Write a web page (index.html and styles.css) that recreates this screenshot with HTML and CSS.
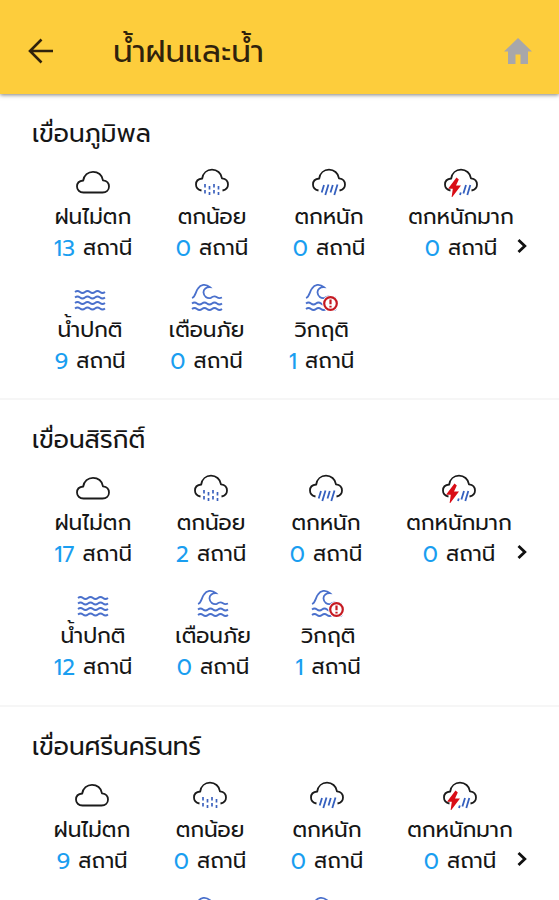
FILE: index.html
```html
<!DOCTYPE html>
<html lang="th">
<head>
  <meta charset="UTF-8">
  <meta name="viewport" content="width=device-width, initial-scale=1.0">
  <title>น้ำฝนและน้ำ</title>
  <link rel="stylesheet" href="styles.css">
</head>
<body>
  <!-- Icons shared by all dams -->
  <svg class="icon-defs" aria-hidden="true">
    <symbol id="cloud" viewBox="0 0 36 30">
      <path class="line" d="M8.500 25.500C4.500 25.500 2 22.800 2 19.500c0-3.400 2.500-5.600 6.200-6C9 8.200 13 4.800 18 4.800s9.200 3.200 10 8.500c3.700.4 6 3 6 6.200 0 3.400-2.600 6-6.500 6z"/>
    </symbol>
    <symbol id="cloud-open" viewBox="0 0 36 30">
      <path class="line" d="M7.500 23.500C4 22.800 2 20.300 2 17.500c0-3.400 2.500-5.700 6.200-6C9 6.100 13 2.700 18 2.700s9.200 3.300 10 8.600c3.700.4 6 3 6 6.200 0 2.800-2 5.300-5.500 6"/>
    </symbol>
    <symbol id="light-rain" viewBox="0 0 36 30">
      <use href="#cloud-open"/>
      <path class="drops" d="M11 17v3.500M11 23v3.500M15.500 19v3.500M15.500 25v3M20 17v3.500M20 23v3.500M24.500 19v3.500M24.500 25v3"/>
    </symbol>
    <symbol id="heavy-rain" viewBox="0 0 36 30">
      <use href="#cloud-open"/>
      <path class="rain" d="M13 18l-2.300 7.500M17.500 17.500l-3.200 10.500M21.800 18l-2.300 7.500M26.500 17.500l-3.200 10.500"/>
    </symbol>
    <symbol id="storm" viewBox="0 0 36 30">
      <use href="#cloud-open"/>
      <path class="rain" d="M17.800 25.500l-.8 2.500M23 18l-2.600 8.500M27.300 18l-3 10"/>
      <path class="bolt" d="M13.500 10.500L5 21.800h4.800L8.500 31l9.500-12.500h-5l2.800-6z"/>
    </symbol>
    <symbol id="waves" viewBox="0 0 32 28">
      <path class="wave" d="M1 9q2.500-2 5 0t5 0 5 0 5 0 5 0 5 0M1 14.500q2.500-2 5 0t5 0 5 0 5 0 5 0 5 0M1 20q2.500-2 5 0t5 0 5 0 5 0 5 0 5 0M1 25.500q2.500-2 5 0t5 0 5 0 5 0 5 0 5 0"/>
    </symbol>
    <symbol id="big-wave" viewBox="0 0 32 28">
      <path class="wave" d="M1 15C4.500 14 4.500 8.500 7 5.500 9.500 1.500 14.500.3 19 4.200 15.500 4 12.300 6 12.500 9.500c.2 3.500 3.500 6.500 7.500 5.300 2.500-2 4.500-1.500 6-.5 1.500 1 3 1 5 .2M1 20.500q2.500-2 5 0t5 0 5 0 5 0 5 0 5 0M1 26q2.500-2 5 0t5 0 5 0 5 0 5 0 5 0"/>
    </symbol>
    <symbol id="critical" viewBox="0 0 34 28">
      <use href="#big-wave" width="32" height="28"/>
      <circle class="alert-back" cx="25.500" cy="20.500" r="8.300"/>
      <circle class="alert" cx="25.500" cy="20.500" r="6.300"/>
      <path class="alert" d="M25.500 16.500v4.800M25.500 22.700v1.800"/>
    </symbol>
    <symbol id="chevron" viewBox="0 0 12 16">
      <path class="arrow" d="M2.500 2l6.300 6-6.300 6"/>
    </symbol>
  </svg>

  <div class="screen">
    <header class="top-bar">
      <svg class="back" viewBox="0 0 26 26"><path d="M25 13H2M13.500 1.500L2 13l11.500 11.500"/></svg>
      <h1 class="title">น้ำฝนและน้ำ</h1>
      <svg class="home" viewBox="0 0 28 26"><path d="M14 0L0 13.500h4V26h7.500v-9.500h5V26H24V13.500h4z"/></svg>
    </header>

    <main>
      <section class="dam">
        <h2 class="dam-name">เขื่อนภูมิพล</h2>
        <div class="stats rain-1">
          <div class="stat"><svg class="weather"><use href="#cloud"/></svg><span class="label">ฝนไม่ตก</span><span class="count"><b>13</b><i>สถานี</i></span></div>
          <div class="stat"><svg class="weather"><use href="#light-rain"/></svg><span class="label">ตกน้อย</span><span class="count"><b>0</b><i>สถานี</i></span></div>
          <div class="stat"><svg class="weather"><use href="#heavy-rain"/></svg><span class="label">ตกหนัก</span><span class="count"><b>0</b><i>สถานี</i></span></div>
          <div class="stat"><svg class="weather"><use href="#storm"/></svg><span class="label">ตกหนักมาก</span><span class="count"><b>0</b><i>สถานี</i></span></div>
          <svg class="chevron"><use href="#chevron"/></svg>
        </div>
        <div class="stats water-1">
          <div class="stat"><svg class="water"><use href="#waves"/></svg><span class="label">น้ำปกติ</span><span class="count"><b>9</b><i>สถานี</i></span></div>
          <div class="stat"><svg class="water"><use href="#big-wave"/></svg><span class="label">เตือนภัย</span><span class="count"><b>0</b><i>สถานี</i></span></div>
          <div class="stat"><svg class="water-alert"><use href="#critical"/></svg><span class="label">วิกฤติ</span><span class="count"><b>1</b><i>สถานี</i></span></div>
        </div>
      </section>

      <section class="dam">
        <h2 class="dam-name">เขื่อนสิริกิติ์</h2>
        <div class="stats rain-2">
          <div class="stat"><svg class="weather"><use href="#cloud"/></svg><span class="label">ฝนไม่ตก</span><span class="count"><b>17</b><i>สถานี</i></span></div>
          <div class="stat"><svg class="weather"><use href="#light-rain"/></svg><span class="label">ตกน้อย</span><span class="count"><b>2</b><i>สถานี</i></span></div>
          <div class="stat"><svg class="weather"><use href="#heavy-rain"/></svg><span class="label">ตกหนัก</span><span class="count"><b>0</b><i>สถานี</i></span></div>
          <div class="stat"><svg class="weather"><use href="#storm"/></svg><span class="label">ตกหนักมาก</span><span class="count"><b>0</b><i>สถานี</i></span></div>
          <svg class="chevron"><use href="#chevron"/></svg>
        </div>
        <div class="stats water-2">
          <div class="stat"><svg class="water"><use href="#waves"/></svg><span class="label">น้ำปกติ</span><span class="count"><b>12</b><i>สถานี</i></span></div>
          <div class="stat"><svg class="water"><use href="#big-wave"/></svg><span class="label">เตือนภัย</span><span class="count"><b>0</b><i>สถานี</i></span></div>
          <div class="stat"><svg class="water-alert"><use href="#critical"/></svg><span class="label">วิกฤติ</span><span class="count"><b>1</b><i>สถานี</i></span></div>
        </div>
      </section>

      <section class="dam">
        <h2 class="dam-name">เขื่อนศรีนครินทร์</h2>
        <div class="stats rain-3">
          <div class="stat"><svg class="weather"><use href="#cloud"/></svg><span class="label">ฝนไม่ตก</span><span class="count"><b>9</b><i>สถานี</i></span></div>
          <div class="stat"><svg class="weather"><use href="#light-rain"/></svg><span class="label">ตกน้อย</span><span class="count"><b>0</b><i>สถานี</i></span></div>
          <div class="stat"><svg class="weather"><use href="#heavy-rain"/></svg><span class="label">ตกหนัก</span><span class="count"><b>0</b><i>สถานี</i></span></div>
          <div class="stat"><svg class="weather"><use href="#storm"/></svg><span class="label">ตกหนักมาก</span><span class="count"><b>0</b><i>สถานี</i></span></div>
          <svg class="chevron"><use href="#chevron"/></svg>
        </div>
        <div class="stats water-3">
          <div class="stat"><svg class="water"><use href="#waves"/></svg></div>
          <div class="stat"><svg class="water"><use href="#big-wave"/></svg></div>
          <div class="stat"><svg class="water-alert"><use href="#critical"/></svg></div>
        </div>
      </section>
    </main>
  </div>
</body>
</html>
```

FILE: styles.css
```css
* {
  box-sizing: border-box;
}

body {
  margin: 0;
  background: #fff;
  color: #161616;
  font-family: "Prompt", "Kanit", "Noto Sans Thai", "Noto Sans", "Lato", sans-serif;
}

.icon-defs {
  position: absolute;
  width: 0;
  height: 0;
}

.screen {
  height: 900px;
  overflow: hidden;
}

/* Top bar */
.top-bar {
  display: flex;
  align-items: center;
  height: 94px;
  padding: 7px 27px 0 28px;
  background: #fdcd3c;
  box-shadow: 0 1px 4px rgba(0, 0, 0, 0.5);
}

.back {
  width: 26px;
  height: 26px;
  fill: none;
  stroke: #30220c;
  stroke-width: 2.6;
}

.title {
  flex: 1;
  margin: 2px 0 0 59px;
  color: #30220c;
  font-size: 31px;
  font-weight: 400;
  line-height: 50px;
}

.home {
  width: 28px;
  height: 26px;
  fill: #a8a7aa;
}

/* One dam */
.dam {
  height: 306.5px;
  padding-top: 23px;
  border-bottom: 2px solid #f6f6f6;
}

.dam:first-child {
  height: 306px;
}

.dam-name {
  height: 34px;
  margin: 0 0 16px 32px;
  font-size: 24.8px;
  font-weight: 400;
  line-height: 34px;
}

.stats {
  display: grid;
  height: 114px;
}

.stat {
  display: flex;
  flex-direction: column;
  align-items: center;
  justify-self: center;
  white-space: nowrap;
}

.rain-1 { grid-template-columns: 186px 52px 182px 82px 40px; }
.rain-2 { grid-template-columns: 186px 50px 180px 86px 40px; }
.rain-3 { grid-template-columns: 184px 52px 182px 84px 40px; }
.water-1 { grid-template-columns: 180px 53px 177px; }
.water-2 { grid-template-columns: 186px 54px 176px; }
.water-3 { grid-template-columns: 180px 54px 182px; }

.weather {
  width: 36px;
  height: 30px;
  margin-bottom: 4px;
  overflow: visible;
}

.water,
.water-alert {
  width: 32px;
  height: 28px;
  margin: 2px 0 3px;
}

.water-alert {
  width: 34px;
}

.label {
  height: 31px;
  font-size: 21.6px;
  line-height: 32px;
}

.count {
  display: flex;
  gap: 8px;
  height: 31px;
  font-size: 21.3px;
  line-height: 32px;
}

.count b {
  color: #1a9ef0;
  font-weight: 400;
  font-size: 22.5px;
}

.count i {
  font-style: normal;
}

.chevron {
  width: 12px;
  height: 16px;
  margin: 71px 0 0 14px;
}

/* Icon strokes */
.line {
  fill: none;
  stroke: #1b1b1b;
  stroke-width: 1.8;
}

.drops {
  fill: none;
  stroke: #3c62be;
  stroke-width: 1.7;
}

.rain {
  fill: none;
  stroke: #3560bf;
  stroke-width: 1.8;
}

.bolt {
  fill: #d90d16;
}

.wave {
  fill: none;
  stroke: #4a70cc;
  stroke-width: 1.8;
}

.alert-back {
  fill: #fff;
}

.alert {
  fill: none;
  stroke: #c51a22;
  stroke-width: 2.2;
}

.arrow {
  fill: none;
  stroke: #111;
  stroke-width: 2.8;
}
```
